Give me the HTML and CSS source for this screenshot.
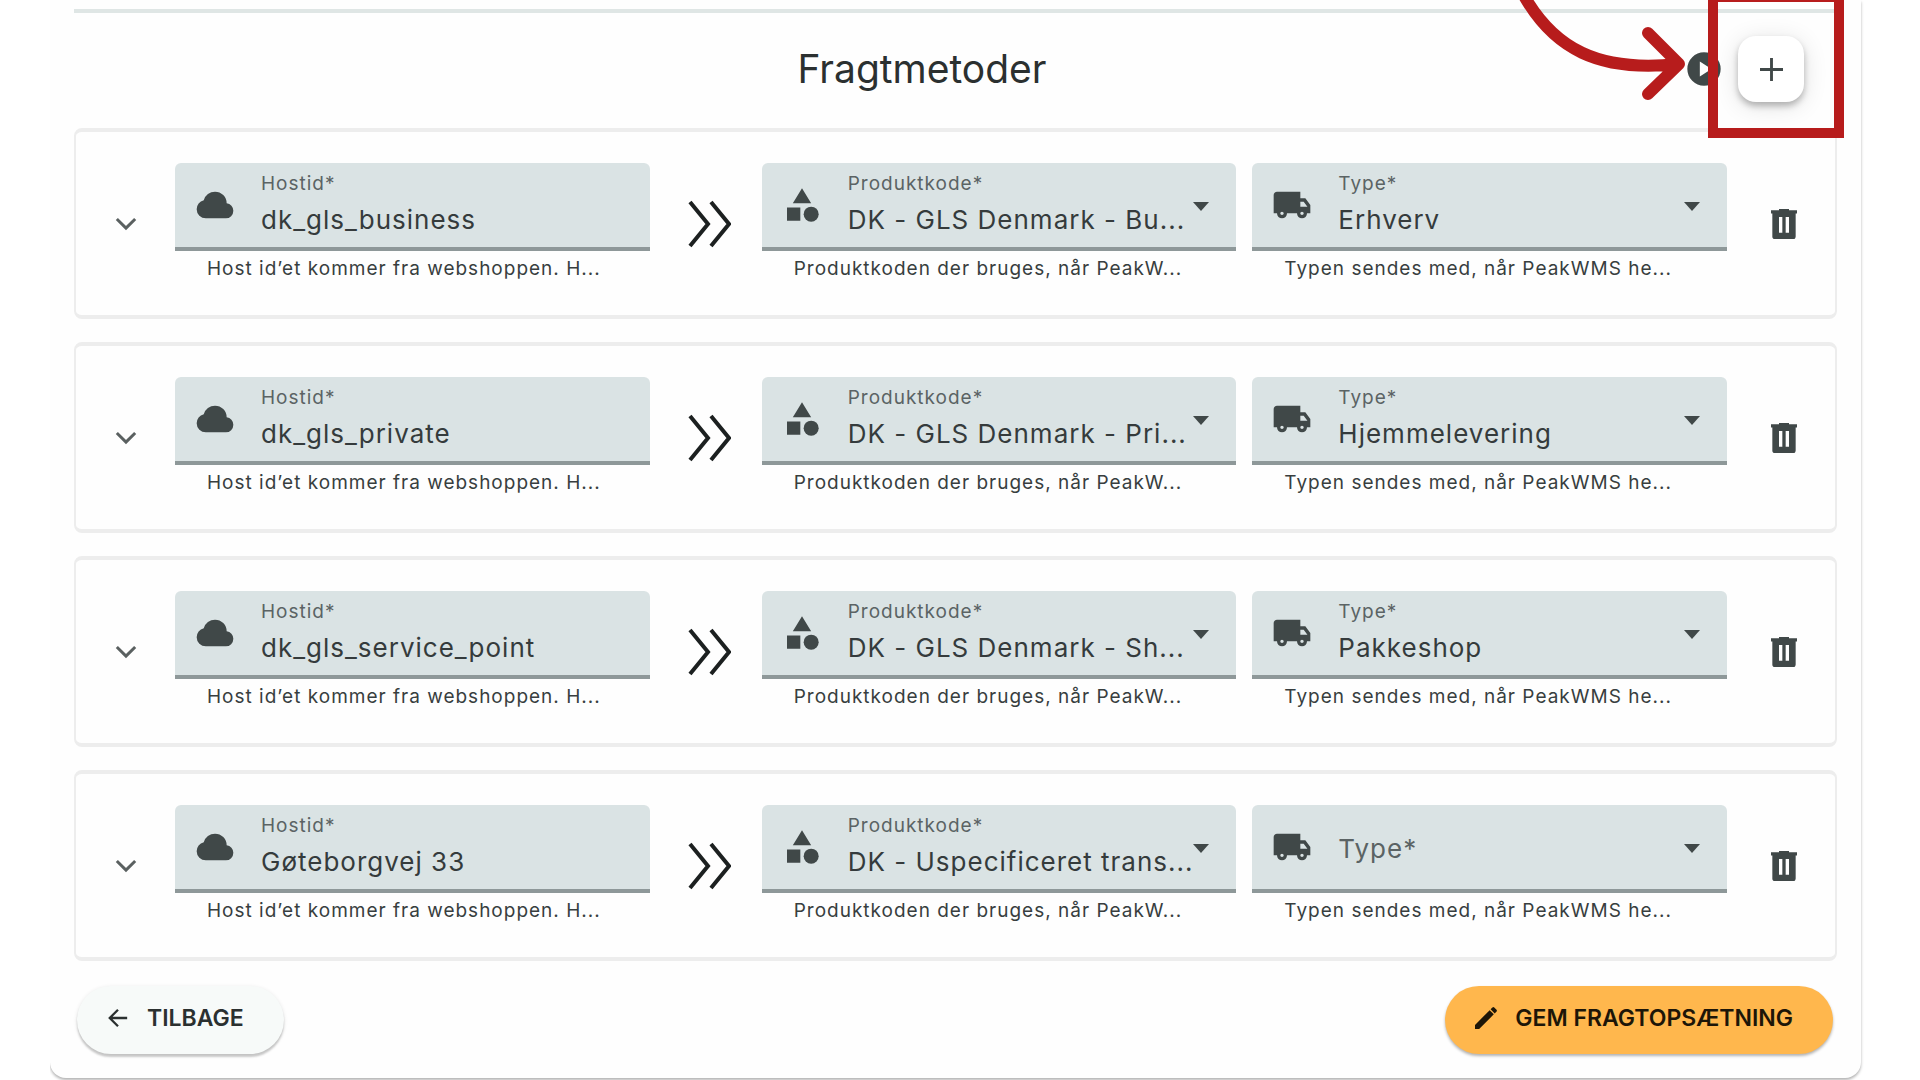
FILE: index.html
```
<!DOCTYPE html>
<html lang="da">
<head>
    <meta charset="UTF-8">
    <meta name="viewport" content="width=device-width, initial-scale=1.0">
    <title>Fragtmetoder</title>
    <link rel="stylesheet" href="styles.css">
</head>
<body>
    <!-- Icon sprite -->
    <svg class="sprite" aria-hidden="true">
        <symbol id="cloud" viewBox="0 0 24 24"><path d="M6.5 20q-2.275 0-3.888-1.575Q1 16.85 1 14.575q0-1.95 1.175-3.475Q3.35 9.575 5.25 9.15q.625-2.3 2.5-3.725Q9.625 4 12 4q2.925 0 4.963 2.037Q19 8.075 19 11q1.725.2 2.863 1.487Q23 13.775 23 15.5q0 1.875-1.312 3.188Q20.375 20 18.5 20Z"/></symbol>
        <symbol id="category" viewBox="0 0 24 24"><path d="M12 2l5.5 9h-11zM3 13.5h8v8H3z"/><circle cx="17.5" cy="17.5" r="4.5"/></symbol>
        <symbol id="truck" viewBox="0 0 24 24"><path d="M6 20q-1.25 0-2.125-.875T3 17H1V6q0-.825.588-1.412Q2.175 4 3 4h14v4h3l3 4v5h-2q0 1.25-.875 2.125T18 20q-1.25 0-2.125-.875T15 17H9q0 1.25-.875 2.125T6 20Zm0-2q.425 0 .713-.288Q7 17.425 7 17t-.287-.712Q6.425 16 6 16t-.713.288Q5 16.575 5 17t.287.712Q5.575 18 6 18Zm12 0q.425 0 .712-.288Q19 17.425 19 17t-.288-.712Q18.425 16 18 16t-.712.288Q17 16.575 17 17t.288.712Q17.575 18 18 18Zm-1-5h4.25L19 10h-2Z"/></symbol>
        <symbol id="trash" viewBox="0 0 24 24"><path fill-rule="evenodd" d="M6.500 21q-.825 0-1.200-.5T5 19.500V5.700H4.200V3.800H9V3h6v.8h4.800v1.900H19v13.800q0 .5-.3 1t-1.200.5ZM9 17.200h2V7.800H9Zm4 0h2V7.800h-2Z"/></symbol>
        <symbol id="expand" viewBox="0 0 24 24"><path d="M6.500 9l5.500 5.500L17.500 9" fill="none" stroke="currentColor" stroke-width="1.800"/></symbol>
        <symbol id="double-arrow" viewBox="0 0 44 48"><path d="M3 2l18 22L3 46M24 2l18 22L24 46" fill="none" stroke="currentColor" stroke-width="4"/></symbol>
        <symbol id="caret" viewBox="0 0 16 9"><path d="M0 0h16L8 9z"/></symbol>
    </svg>

    <main class="page">
        <section class="card">
            <hr class="divider">

            <header class="card-header">
                <h1 class="title">Fragtmetoder</h1>
                <div class="actions">
                    <svg class="icon" viewBox="0 0 24 24" role="img" aria-label="Afspil"><path fill-rule="evenodd" d="M12 2a10 10 0 1 0 0 20a10 10 0 0 0 0-20zM9.500 7.500v9l7-4.500z"/></svg>
                    <button type="button" class="add-btn" aria-label="Tilføj">
                        <svg class="add-icon" viewBox="0 0 24 24"><path d="M12 0v24M0 12h24" stroke="currentColor" stroke-width="3"/></svg>
                    </button>
                </div>
                <svg class="pointer" viewBox="0 0 200 120" aria-hidden="true"><path d="M16 -20C50 54 104 72 178 64M148 33l31 31l-31 30"/></svg>
                <div class="highlight"></div>
            </header>

            <form class="methods">
                <div class="method">
                    <button type="button" class="icon-btn expand-btn" aria-label="Fold ud"><svg class="expand-icon"><use href="#expand"/></svg></button>
                    <div class="field-group">
                        <div class="field">
                            <svg class="icon"><use href="#cloud"/></svg>
                            <div class="field-body">
                                <label for="host1">Hostid*</label>
                                <input type="text" id="host1" value="dk_gls_business">
                            </div>
                        </div>
                        <p class="hint">Host id’et kommer fra webshoppen. H...</p>
                    </div>
                    <svg class="double-arrow"><use href="#double-arrow"/></svg>
                    <div class="field-group">
                        <div class="field">
                            <svg class="icon"><use href="#category"/></svg>
                            <div class="field-body">
                                <label for="code1">Produktkode*</label>
                                <select id="code1"><option>DK - GLS Denmark - Bu...</option></select>
                            </div>
                            <svg class="caret"><use href="#caret"/></svg>
                        </div>
                        <p class="hint">Produktkoden der bruges, når PeakW...</p>
                    </div>
                    <div class="field-group">
                        <div class="field">
                            <svg class="icon"><use href="#truck"/></svg>
                            <div class="field-body">
                                <label for="type1">Type*</label>
                                <select id="type1"><option>Erhverv</option></select>
                            </div>
                            <svg class="caret"><use href="#caret"/></svg>
                        </div>
                        <p class="hint">Typen sendes med, når PeakWMS he...</p>
                    </div>
                    <button type="button" class="icon-btn delete-btn" aria-label="Slet"><svg class="icon"><use href="#trash"/></svg></button>
                </div>

                <div class="method">
                    <button type="button" class="icon-btn expand-btn" aria-label="Fold ud"><svg class="expand-icon"><use href="#expand"/></svg></button>
                    <div class="field-group">
                        <div class="field">
                            <svg class="icon"><use href="#cloud"/></svg>
                            <div class="field-body">
                                <label for="host2">Hostid*</label>
                                <input type="text" id="host2" value="dk_gls_private">
                            </div>
                        </div>
                        <p class="hint">Host id’et kommer fra webshoppen. H...</p>
                    </div>
                    <svg class="double-arrow"><use href="#double-arrow"/></svg>
                    <div class="field-group">
                        <div class="field">
                            <svg class="icon"><use href="#category"/></svg>
                            <div class="field-body">
                                <label for="code2">Produktkode*</label>
                                <select id="code2"><option>DK - GLS Denmark - Pri...</option></select>
                            </div>
                            <svg class="caret"><use href="#caret"/></svg>
                        </div>
                        <p class="hint">Produktkoden der bruges, når PeakW...</p>
                    </div>
                    <div class="field-group">
                        <div class="field">
                            <svg class="icon"><use href="#truck"/></svg>
                            <div class="field-body">
                                <label for="type2">Type*</label>
                                <select id="type2"><option>Hjemmelevering</option></select>
                            </div>
                            <svg class="caret"><use href="#caret"/></svg>
                        </div>
                        <p class="hint">Typen sendes med, når PeakWMS he...</p>
                    </div>
                    <button type="button" class="icon-btn delete-btn" aria-label="Slet"><svg class="icon"><use href="#trash"/></svg></button>
                </div>

                <div class="method">
                    <button type="button" class="icon-btn expand-btn" aria-label="Fold ud"><svg class="expand-icon"><use href="#expand"/></svg></button>
                    <div class="field-group">
                        <div class="field">
                            <svg class="icon"><use href="#cloud"/></svg>
                            <div class="field-body">
                                <label for="host3">Hostid*</label>
                                <input type="text" id="host3" value="dk_gls_service_point">
                            </div>
                        </div>
                        <p class="hint">Host id’et kommer fra webshoppen. H...</p>
                    </div>
                    <svg class="double-arrow"><use href="#double-arrow"/></svg>
                    <div class="field-group">
                        <div class="field">
                            <svg class="icon"><use href="#category"/></svg>
                            <div class="field-body">
                                <label for="code3">Produktkode*</label>
                                <select id="code3"><option>DK - GLS Denmark - Sh...</option></select>
                            </div>
                            <svg class="caret"><use href="#caret"/></svg>
                        </div>
                        <p class="hint">Produktkoden der bruges, når PeakW...</p>
                    </div>
                    <div class="field-group">
                        <div class="field">
                            <svg class="icon"><use href="#truck"/></svg>
                            <div class="field-body">
                                <label for="type3">Type*</label>
                                <select id="type3"><option>Pakkeshop</option></select>
                            </div>
                            <svg class="caret"><use href="#caret"/></svg>
                        </div>
                        <p class="hint">Typen sendes med, når PeakWMS he...</p>
                    </div>
                    <button type="button" class="icon-btn delete-btn" aria-label="Slet"><svg class="icon"><use href="#trash"/></svg></button>
                </div>

                <div class="method">
                    <button type="button" class="icon-btn expand-btn" aria-label="Fold ud"><svg class="expand-icon"><use href="#expand"/></svg></button>
                    <div class="field-group">
                        <div class="field">
                            <svg class="icon"><use href="#cloud"/></svg>
                            <div class="field-body">
                                <label for="host4">Hostid*</label>
                                <input type="text" id="host4" value="Gøteborgvej 33">
                            </div>
                        </div>
                        <p class="hint">Host id’et kommer fra webshoppen. H...</p>
                    </div>
                    <svg class="double-arrow"><use href="#double-arrow"/></svg>
                    <div class="field-group">
                        <div class="field">
                            <svg class="icon"><use href="#category"/></svg>
                            <div class="field-body">
                                <label for="code4">Produktkode*</label>
                                <select id="code4"><option>DK - Uspecificeret trans...</option></select>
                            </div>
                            <svg class="caret"><use href="#caret"/></svg>
                        </div>
                        <p class="hint">Produktkoden der bruges, når PeakW...</p>
                    </div>
                    <div class="field-group">
                        <div class="field field-empty">
                            <svg class="icon"><use href="#truck"/></svg>
                            <div class="field-body">
                                <label for="type4">Type*</label>
                                <select id="type4"><option></option></select>
                            </div>
                            <svg class="caret"><use href="#caret"/></svg>
                        </div>
                        <p class="hint">Typen sendes med, når PeakWMS he...</p>
                    </div>
                    <button type="button" class="icon-btn delete-btn" aria-label="Slet"><svg class="icon"><use href="#trash"/></svg></button>
                </div>
            </form>

            <footer class="card-footer">
                <button type="button" class="btn btn-back">
                    <svg class="btn-icon" viewBox="0 0 24 24"><path d="M22 12H3M12 3l-9 9l9 9" fill="none" stroke="currentColor" stroke-width="2.500"/></svg>
                    TILBAGE
                </button>
                <button type="button" class="btn btn-save">
                    <svg class="btn-icon" viewBox="0 0 24 24"><path d="M0 24v-4.500L16 3.500l4.500 4.500L4.500 24zM17 2.500L19 .5q1-.8 2 0l2.500 2.500q.8 1 0 2l-2 2z"/></svg>
                    GEM FRAGTOPSÆTNING
                </button>
            </footer>
        </section>
    </main>
</body>
</html>
```
FILE: styles.css
```
:root {
    --icon: #404848;
    --text: #2b3030;
    --field: #dae3e4;
    --line: #ededed;
    --red: #b71c1c;
    --accent: #ffb74d;
}

* {
    box-sizing: border-box;
}

body {
    margin: 0;
    background: #fff;
    color: var(--text);
    font-family: Inter, "Liberation Sans", sans-serif;
}

.sprite {
    display: none;
}

svg {
    display: block;
    flex: none;
    fill: currentColor;
}

/* Card */
.page {
    margin-left: 50px;
    padding: 0 59px 2px 0;
    overflow: hidden;
}

.card {
    padding: 9px 24px 24px;
    background: #fefefe;
    border-radius: 0 0 16px 16px;
    box-shadow: 0 2px 3px rgba(0,0,0,0.3);
}

.divider {
    height: 4px;
    margin: 0;
    border: 0;
    background: #dfe6e5;
}

.card-header {
    position: relative;
    display: grid;
    grid-template-columns: 1fr auto 1fr;
    align-items: center;
    height: 112px;
    margin-bottom: 3px;
    padding-right: 33px;
}

.title {
    grid-column: 2;
    margin: 0;
    padding-right: 34px;
    font-size: 39px;
    font-weight: 400;
    line-height: 48px;
}

.actions {
    display: flex;
    align-items: center;
    justify-content: flex-end;
    gap: 14px;
    color: var(--icon);
}

.icon {
    width: 40px;
    height: 40px;
    color: var(--icon);
}

.add-btn {
    display: flex;
    align-items: center;
    justify-content: center;
    width: 66px;
    height: 66px;
    padding: 0;
    border: 0;
    border-radius: 18px;
    background: #fff;
    color: var(--icon);
    box-shadow: 0 4px 6px rgba(0,0,0,0.25), 0 4px 24px rgba(0,0,0,0.12);
}

.add-icon {
    width: 23px;
    height: 23px;
}

/* Red arrow and frame around the add button */
.pointer {
    position: absolute;
    top: -13px;
    right: 137px;
    width: 200px;
    height: 120px;
    fill: none;
    stroke: var(--red);
    stroke-width: 12px;
    stroke-linecap: round;
    stroke-linejoin: round;
}

.highlight {
    position: absolute;
    top: -21px;
    right: -7px;
    width: 136px;
    height: 146px;
    border: 10px solid var(--red);
}

/* Shipping methods */
.methods {
    display: flex;
    flex-direction: column;
    gap: 23px;
}

.method {
    display: flex;
    align-items: center;
    height: 191px;
    border: solid var(--line);
    border-width: 4px 2px;
    border-radius: 8px;
}

.icon-btn {
    display: flex;
    justify-content: center;
    flex: none;
    padding: 0;
    border: 0;
    background: none;
}

.expand-btn {
    width: 99px;
    color: #5a6060;
}

.expand-icon {
    width: 40px;
    height: 40px;
}

.delete-btn {
    width: 108px;
    padding-left: 6px;
}

.double-arrow {
    width: 44px;
    height: 48px;
    margin: 0 31px 0 37px;
    color: #1c2020;
}

.field-group {
    flex: 1 1 0;
    min-width: 0;
}

.field-group + .field-group {
    margin-left: 16px;
}

.field {
    position: relative;
    display: flex;
    align-items: center;
    gap: 26px;
    height: 88px;
    padding: 0 26px 0 20px;
    border-bottom: 4px solid #8e9899;
    border-radius: 6px 6px 0 0;
    background: var(--field);
}

.field-body {
    flex: 1;
    min-width: 0;
}

.field label {
    display: block;
    color: #5b6364;
    font-size: 19px;
    line-height: 24px;
    letter-spacing: 1px;
}

.field input,
.field select {
    display: block;
    width: 100%;
    height: 36px;
    margin: 6px 0 0;
    padding: 0;
    border: 0;
    outline: 0;
    appearance: none;
    background: none;
    color: #353b3c;
    font-family: inherit;
    font-size: 26px;
    line-height: 36px;
    letter-spacing: 1px;
}

.caret {
    position: absolute;
    top: 39px;
    right: 27px;
    width: 16px;
    height: 9px;
    color: var(--icon);
    pointer-events: none;
}

.field-empty label {
    position: absolute;
    top: 26px;
    left: 86px;
    font-size: 26px;
    line-height: 36px;
}

.hint {
    margin: 6px 0 0;
    padding: 0 0 4px 32px;
    color: #383e3f;
    font-size: 19px;
    line-height: 24px;
    letter-spacing: 1px;
    white-space: nowrap;
}

/* Footer buttons */
.card-footer {
    display: flex;
    justify-content: space-between;
    padding: 25px 4px 0 3px;
}

.btn {
    display: flex;
    align-items: center;
    gap: 18px;
    height: 68px;
    padding: 0 40px 4px 30px;
    border: 0;
    border-radius: 34px;
    font-family: inherit;
    font-size: 23px;
    font-weight: 600;
    line-height: 28px;
}

.btn-icon {
    width: 22px;
    height: 22px;
}

.btn-back {
    background: #f7faf9;
    color: #2b3030;
    box-shadow: 0 3px 2px rgba(0,0,0,0.18), 0 1px 4px rgba(0,0,0,0.1);
}

.btn-save {
    background: var(--accent);
    color: #1d1608;
    box-shadow: 0 2px 3px rgba(0,0,0,0.3);
}
```
